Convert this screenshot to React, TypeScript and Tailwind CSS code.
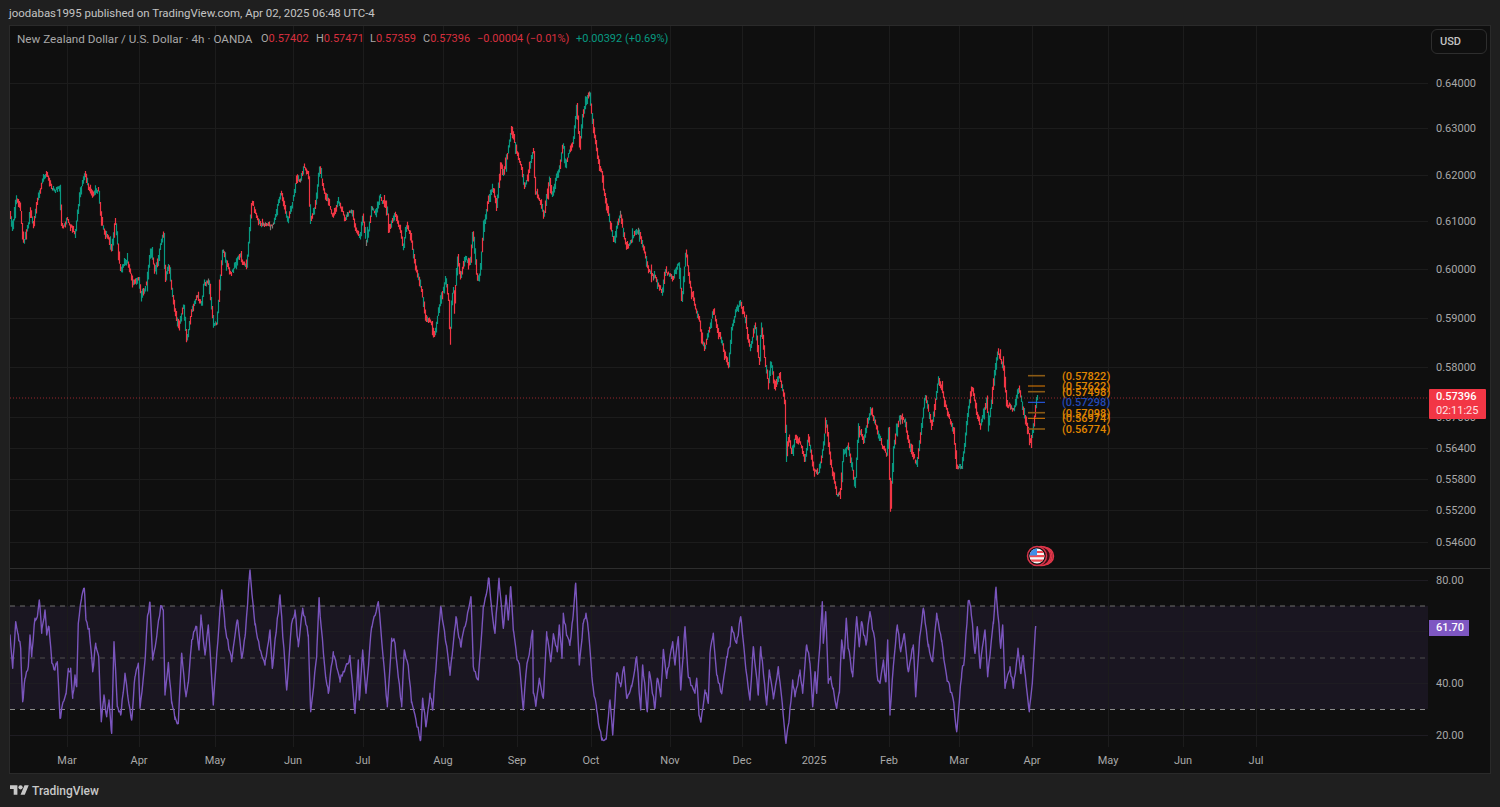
import React from 'react';

const FONT = 'font-["Roboto","Liberation_Sans",sans-serif]';

// points read off the chart, as [x, y] pairs in crop coordinates (3x crops)
const crop = (ox: number, oy: number, z: number[]) => {
  const out: [number, number][] = [];
  for (let i = 0; i < z.length; i += 2) out.push([ox + z[i] / 3, oy + z[i + 1] / 3]);
  return out;
};

const pricePts = [
  ...crop(0, 140, [30,230,38,265,48,170,60,200,70,310,85,260,90,210,100,260,110,180,125,130,140,90,155,150,178,140,185,260,200,235,225,280,235,190,255,90,265,140,280,170,295,145,305,250,325,300,335,340,345,240,360,390,380,360,400,430,415,405,425,470,440,430,450,325,465,395,490,275,495,430,505,375,520,480,535,570,550,490,560,600,575,510,590,470,605,495,610,440,625,415,640,550,650,540,668,325,690,400,700,390,715,340,740,380,755,190,780,250,800,255,820,255,843,150,862,250,880,170,890,110]),
  ...crop(300, 85, [0,290,12,250,25,270,30,405,45,370,58,240,70,310,85,360,100,390,115,350,135,395,155,375,168,445,180,465,188,400,198,480,215,375,230,385,240,335,262,380,265,440,285,380,300,430,310,495,318,420,330,450,345,540,365,620,378,700,395,715,402,755,420,650,435,580,446,650,450,770,454,650,460,600,462,680,472,520,482,580,495,510,510,540,518,435,530,570,537,585,550,440,565,340,578,300,590,360,602,225,608,265,622,200,635,130,650,200,665,240,672,300,685,260,700,195,705,320,720,340,732,395,748,280,755,330,775,260,790,175,795,240,810,195,820,165,830,55,838,190,848,85,855,55,868,25,880,130,895,240,905,255,910,310,925,390,940,470,960,385,975,470,985,490,1015,435,1035,510,1045,560,1065,580,1085,620,1095,555,1120,580,1135,530,1145,650,1157,500,1170,610,1190,680]),
  ...crop(660, 240, [120,255,125,300,135,320,148,260,160,205,175,280,195,350,205,385,215,265,225,225,240,190,255,240,270,330,285,255,298,370,303,250,315,360,325,430,332,360,345,445,358,395,375,490,378,660,385,590,395,640,405,590,425,620,435,660,445,590,460,690,475,700,490,620,497,545,510,660,530,770,540,770,550,640,562,610,575,680,585,740,595,555,610,600,632,497,645,550,665,620,680,650,686,560,690,810,700,620,718,530,735,545,750,630,770,680,780,590,795,465,815,560,835,422,860,510,880,570,890,690,905,680,920,550,935,440,960,560,980,470,985,555,1005,395,1012,335,1030,380,1040,500,1060,510,1075,440,1090,510,1110,605,1120,560,1130,465]),
].sort((a, b) => a[0] - b[0]);

const rsiPts = [
  ...crop(0, 560, [30,230,38,325,47,185,55,225,62,265,68,425,75,355,85,320,90,225,95,290,105,175,112,170,118,120,125,220,135,150,140,225,147,200,155,300,165,330,172,305,180,475,190,425,198,400,205,330,212,325,218,415,225,345,230,380,235,190,245,110,253,85,258,180,268,215,278,335,287,250,296,290,304,485,312,405,320,470,327,420,335,520,342,245,352,440,362,465,375,340,385,420,395,480,405,350,415,310,420,445,435,300,443,165,450,127,458,300,470,230,482,140,490,150,495,405,505,310,515,430,525,470,535,490,545,280,558,410,565,370,575,240,590,200,597,270,603,165,615,285,625,195,640,435,650,285,665,90,675,200,695,305,712,180,725,295,735,230,750,30,765,195,780,270,795,315,810,210,817,325,840,105,860,390,875,190,885,150,895,260,908,145,925,225,932,455,950,290,957,118,975,330,985,400,1000,275,1020,360,1050,290,1065,460,1075,300,1078,420,1088,270,1098,400,1115,200,1135,125,1162,440,1175,235,1185,250,1205,440,1213,270,1225,320,1235,425,1262,540,1268,415,1278,500,1290,400,1298,450,1322,140,1335,230,1350,340,1368,170,1382,260,1395,200,1413,112,1420,320,1435,360,1450,140,1467,55,1475,145,1485,220,1497,55]),
  ...crop(500, 560, [10,205,18,110,25,180,32,80,40,210,50,290,58,310,70,450,80,320,90,265,98,212,100,400,108,435,118,355,130,415,140,215,152,305,160,225,172,275,178,195,186,295,190,160,200,225,210,250,218,180,227,70,238,315,250,190,258,160,265,210,278,375,290,450,305,540,318,535,330,420,338,525,350,340,362,380,372,320,380,415,395,380,410,290,422,450,428,315,442,455,448,335,465,445,472,355,482,410,490,270,500,355,518,245,525,315,535,230,542,390,555,200,565,350,585,400,590,355,597,465,603,485,615,390,625,430,630,280,640,220,650,345,665,400,680,290,690,260,695,200,710,250,722,170,735,300,750,420,760,260,775,405,782,260,800,435,808,330,820,410,835,320,858,550,868,475,878,360,885,410,900,330]),
  ...crop(780, 560, [68,400,80,255,90,310,98,440,105,335,110,400,120,250,127,125,130,250,137,155,145,370,152,350,160,385,170,445,178,395,185,240,192,295,199,175,205,265,218,350,230,170,238,260,245,185,258,255,270,155,285,250,292,350,300,370,310,305,318,365,323,240,330,465,340,320,352,195,362,275,372,222,385,335,400,255,407,410,420,225,430,145,445,260,458,305,470,160,485,245,500,350,520,420,530,515,545,340,553,300,565,122,572,140,585,280,592,200,600,320,615,210,623,350,640,185,648,82,662,265,668,195,675,385,690,320,700,385,714,265,722,340,730,290,748,455,757,370,767,198]),
];

let seed = 20250402;
const rnd = () => {
  seed = (seed * 1664525 + 1013904223) % 4294967296;
  return seed / 4294967296;
};

const valueAt = (pts: [number, number][], x: number) => {
  for (let i = 1; i < pts.length; i++) {
    if (x <= pts[i][0]) {
      const [x0, y0] = pts[i - 1];
      const [x1, y1] = pts[i];
      return y0 + ((y1 - y0) * (x - x0)) / Math.max(x1 - x0, 0.01);
    }
  }
  return pts[pts.length - 1][1];
};

// one pixel column per step, like bars squeezed together at this zoom
const buildCandles = () => {
  let up = '';
  let down = '';
  let mix = '';
  let drift = 0;
  for (let x = 10; x <= 1037; x += 1) {
    const y = valueAt(pricePts, x);
    const prev = valueAt(pricePts, x - 0.5);
    const next = valueAt(pricePts, x + 0.5);
    drift = drift * 0.65 + (rnd() - 0.5) * 3.8;
    let top = Math.min(prev, next, y) + drift - 0.6 - rnd() * rnd() * 4;
    let bottom = Math.max(prev, next, y) + drift + 0.6 + rnd() * rnd() * 4;
    if (rnd() < 0.07) top -= 2 + rnd() * 4;
    if (rnd() < 0.07) bottom += 2 + rnd() * 4;
    const seg = `M${x + 0.5} ${top.toFixed(1)}V${bottom.toFixed(1)}`;
    const slope = next - prev;
    const choppy = Math.abs(slope) < 1.1;
    if (choppy && rnd() < 0.3) mix += seg;
    else if (slope < 0 ? rnd() < 0.78 : rnd() < 0.22) up += seg;
    else down += seg;
  }
  return { up, down, mix };
};
const candles = buildCandles();

const buildRsi = () => {
  const d: string[] = [];
  let known = 0;
  for (let x = rsiPts[0][0]; x <= rsiPts[rsiPts.length - 1][0]; x += 1.1) {
    // keep the read points exact, only jitter what lies between them
    while (known < rsiPts.length && rsiPts[known][0] <= x) {
      d.push(`${rsiPts[known][0].toFixed(1)} ${rsiPts[known][1].toFixed(1)}`);
      known++;
    }
    const y = valueAt(rsiPts, x) + (rnd() - 0.5) * 6;
    d.push(`${x.toFixed(1)} ${y.toFixed(1)}`);
  }
  const last = rsiPts[rsiPts.length - 1];
  d.push(`${last[0].toFixed(1)} ${last[1].toFixed(1)}`);
  return 'M' + d.join('L');
};
const rsiLine = buildRsi();

const priceTicks = [
  { y: 83, t: '0.64000' },
  { y: 128, t: '0.63000' },
  { y: 175, t: '0.62000' },
  { y: 221, t: '0.61000' },
  { y: 269, t: '0.60000' },
  { y: 318, t: '0.59000' },
  { y: 367, t: '0.58000' },
  { y: 417, t: '0.57000' },
  { y: 448, t: '0.56400' },
  { y: 479, t: '0.55800' },
  { y: 510, t: '0.55200' },
  { y: 542, t: '0.54600' },
];
const rsiTicks = [
  { y: 580, t: '80.00' },
  { y: 683, t: '40.00' },
  { y: 735, t: '20.00' },
];
const months = [
  { x: 67, t: 'Mar' },
  { x: 139, t: 'Apr' },
  { x: 215, t: 'May' },
  { x: 293, t: 'Jun' },
  { x: 363, t: 'Jul' },
  { x: 443, t: 'Aug' },
  { x: 517, t: 'Sep' },
  { x: 591, t: 'Oct' },
  { x: 670, t: 'Nov' },
  { x: 742, t: 'Dec' },
  { x: 814, t: '2025' },
  { x: 889, t: 'Feb' },
  { x: 959, t: 'Mar' },
  { x: 1032, t: 'Apr' },
  { x: 1108, t: 'May' },
  { x: 1183, t: 'Jun' },
  { x: 1256, t: 'Jul' },
];
const fibs = [
  { y: 375.7, t: '(0.57822)', line: '#8a5a14', text: '#e08600', w: 1.6 },
  { y: 386, t: '(0.57622)', line: '#e67e00', text: '#e08600', w: 1 },
  { y: 391.7, t: '(0.57498)', line: '#8a5a14', text: '#e08600', w: 1.6 },
  { y: 402.3, t: '(0.57298)', line: '#2962ff', text: '#2249b8', w: 1 },
  { y: 412.7, t: '(0.57098)', line: '#8a5a14', text: '#e08600', w: 1.6 },
  { y: 418.3, t: '(0.56974)', line: '#e67e00', text: '#e08600', w: 1 },
  { y: 429, t: '(0.56774)', line: '#8a5a14', text: '#e08600', w: 1.6 },
];

const GridV = ({ y1, y2 }: { y1: number; y2: number }) => (
  <g stroke="#1c1c1c" strokeWidth="1">
    {months.map(m => (
      <line key={m.x} x1={m.x + 0.5} x2={m.x + 0.5} y1={y1} y2={y2} />
    ))}
  </g>
);

const AxisTicks = ({ ticks, start }: { ticks: { y: number; t: string }[]; start: number }) => {
  let cursor = start;
  return (
    <>
      {ticks.map(tick => {
        const gap = tick.y - 7 - cursor;
        cursor = tick.y + 7;
        return (
          <div key={tick.t} className="h-[14px] leading-[14px] pl-[8px]" style={{ marginTop: gap }}>
            {tick.t}
          </div>
        );
      })}
    </>
  );
};

const EventFlag = () => (
  <g>
    <circle cx="1045" cy="556" r="8.5" fill="#3a0e14" stroke="#e0374a" strokeWidth="1.5" />
    <circle cx="1043" cy="556" r="9" fill="#3a0e14" stroke="#e0374a" strokeWidth="1.5" />
    <circle cx="1041" cy="556" r="9.5" fill="#3a0e14" stroke="#e0374a" strokeWidth="1.5" />
    <circle cx="1037" cy="556" r="9.5" fill="#111" stroke="#d8344a" strokeWidth="1.5" />
    <clipPath id="flag">
      <circle cx="1037" cy="556" r="7.5" />
    </clipPath>
    <g clipPath="url(#flag)">
      <rect x="1029" y="548" width="16" height="16" fill="#f4f4f4" />
      <rect x="1029" y="551" width="16" height="2" fill="#ee4a52" />
      <rect x="1029" y="555" width="16" height="2.2" fill="#ee4a52" />
      <rect x="1029" y="559.5" width="16" height="2.2" fill="#ee4a52" />
      <rect x="1029" y="548" width="8" height="7.5" fill="#3f8fe8" />
    </g>
  </g>
);

const Legend = () => (
  <div className="absolute left-[7px] top-[6px] flex items-center h-[14px] text-[11px] leading-[14px] whitespace-nowrap text-[#a8a8a8]">
    <span className="w-[244px] text-[11.7px]">New Zealand Dollar / U.S. Dollar · 4h · OANDA</span>
    {[
      ['O', '0.57402', 'w-[55px]'],
      ['H', '0.57471', 'w-[54px]'],
      ['L', '0.57359', 'w-[53px]'],
      ['C', '0.57396', 'w-[54px]'],
    ].map(([k, v, w]) => (
      <span key={k} className={w}>
        {k}
        <span className="text-[#d8303f]">{v}</span>
      </span>
    ))}
    <span className="w-[99px] text-[#d8303f]">−0.00004 (−0.01%)</span>
    <span className="text-[#089981]">+0.00392 (+0.69%)</span>
  </div>
);

export default function App() {
  return (
    <div className={`${FONT} w-[1500px] h-[807px] flex flex-col bg-[#1f1f1f] text-[#a8a8a8] overflow-hidden`}>
      <div className="h-[25px] pl-[9px] text-[11.45px] leading-[27px] text-[#c4c4c4] whitespace-nowrap">
        joodabas1995 published on TradingView.com, Apr 02, 2025 06:48 UTC-4
      </div>

      <div className="ml-[9px] w-[1482px] h-[749px] flex flex-col border border-[#2a2a2a] bg-[#0f0f0f] text-[11px]">
        {/* price pane */}
        <div className="relative h-[542px] flex">
          <svg className="block w-[1418px] h-[542px]" viewBox="10 26 1418 542">
            <GridV y1={26} y2={568} />
            <g stroke="#1c1c1c" strokeWidth="1">
              {priceTicks.map(t => (
                <line key={t.y} x1="10" x2="1428" y1={t.y + 0.5} y2={t.y + 0.5} />
              ))}
            </g>
            <g fill="none" strokeWidth="1.2">
              <path d={candles.up} stroke="#089981" />
              <path d={candles.down} stroke="#f23645" />
              <path d={candles.mix} stroke="#7d7672" />
            </g>
            <line x1="10" x2="1428" y1="398" y2="398" stroke="#f23645" strokeOpacity="0.6" strokeWidth="1" strokeDasharray="1 2" />
            {fibs.map(f => (
              <g key={f.t}>
                <line x1="1028" x2="1045" y1={f.y} y2={f.y} stroke={f.line} strokeWidth={f.w} />
                <text x="1062" y={f.y + 4} fontSize="11" fontWeight="500" fill={f.text}>
                  {f.t}
                </text>
              </g>
            ))}
            <EventFlag />
          </svg>

          <div className="w-[62px] flex flex-col items-start">
            <div className="mt-[3px] ml-[3px] w-[56px] h-[25px] rounded-[6px] border border-[#2e2e2e] pl-[8px] text-[11px] leading-[23px] font-medium text-[#c4c4c4]">
              USD
            </div>
            <AxisTicks ticks={priceTicks} start={53} />
          </div>

          <Legend />

          <div className="absolute left-[1419px] top-[363px] w-[57px] h-[30px] bg-[#f23645] rounded-[1px] pl-[7px] pt-[1px] text-[11px] leading-[14px] text-[#ffffff]">
            <div className="font-medium">0.57396</div>
            <div className="text-[#ffe0e3]">02:11:25</div>
          </div>
        </div>

        <div className="h-px bg-[#2e2e2e]" />

        {/* rsi pane */}
        <div className="relative h-[178px] flex">
          <svg className="block w-[1418px] h-[178px]" viewBox="10 569 1418 178">
            <rect x="10" y="606" width="1418" height="103" fill="#7e57c2" fillOpacity="0.1" />
            <GridV y1={569} y2={747} />
            <g stroke="#1e1c22" strokeWidth="1">
              {[580, 631, 683, 735].map(y => (
                <line key={y} x1="10" x2="1428" y1={y + 0.5} y2={y + 0.5} />
              ))}
            </g>
            <g strokeWidth="1" strokeDasharray="5 5">
              <line x1="10" x2="1428" y1="606" y2="606" stroke="#6e6e6e" />
              <line x1="10" x2="1428" y1="658" y2="658" stroke="#4e4e4e" />
              <line x1="10" x2="1428" y1="709.5" y2="709.5" stroke="#8a8a8a" />
            </g>
            <path d={rsiLine} stroke="#7a55bd" strokeWidth="1.4" fill="none" strokeLinejoin="round" />
          </svg>

          <div className="w-[62px] flex flex-col items-start">
            <AxisTicks ticks={rsiTicks} start={568} />
          </div>

          <div className="absolute left-[1419px] top-[51px] w-[40px] h-[16px] bg-[#7e57c2] pl-[7px] text-[11px] leading-[16px] font-medium text-[#ffffff]">
            61.70
          </div>
        </div>

        {/* time axis */}
        <div className="h-[26px] pt-[1px] flex items-center">
          {months.map((m, i) => (
            <div
              key={m.x}
              className="w-[40px] text-center shrink-0 leading-[14px]"
              style={{ marginLeft: i === 0 ? m.x - 30 : m.x - months[i - 1].x - 40 }}
            >
              {m.t}
            </div>
          ))}
        </div>
      </div>

      <div className="h-[33px] pl-[10px] flex items-center gap-[3px] text-[12px] font-medium text-[#c8c8c8]">
        <svg width="19" height="15" viewBox="0 0 36 28" fill="#c8c8c8">
          <path d="M14 22H7V11H0V4h14v18zM28 22h-8l7.5-18h8L28 22z" />
          <circle cx="20" cy="8" r="4" />
        </svg>
        <span>TradingView</span>
      </div>
    </div>
  );
}
